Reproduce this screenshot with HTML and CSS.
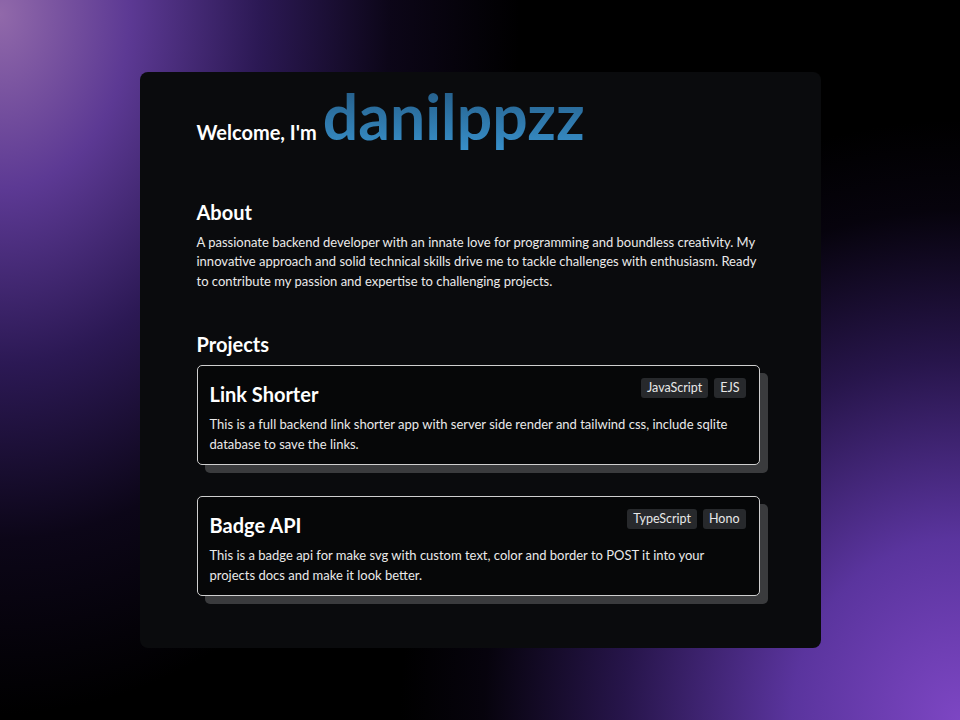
FILE: index.html
```html
<!DOCTYPE html>
<html lang="en">
<head>
<meta charset="utf-8">
<title>danilppzz</title>
<link rel="stylesheet" href="styles.css">
</head>
<body>
<main class="panel">
  <header class="hero">
    <h1 class="hero-title"><span class="hero-small">Welcome, I'm</span> <span class="hero-name">danilppzz</span></h1>
  </header>
  <section class="section about">
    <h2 class="section-title">About</h2>
    <p class="about-text">A passionate backend developer with an innate love for programming and boundless creativity. My innovative approach and solid technical skills drive me to tackle challenges with enthusiasm. Ready to contribute my passion and expertise to challenging projects.</p>
  </section>
  <section class="section projects">
    <h2 class="section-title">Projects</h2>
    <div class="project-list">
      <article class="project">
        <div class="project-head">
          <h3 class="project-title">Link Shorter</h3>
          <div class="tags"><span class="tag">JavaScript</span><span class="tag">EJS</span></div>
        </div>
        <p class="project-desc">This is a full backend link shorter app with server side render and tailwind css, include sqlite database to save the links.</p>
      </article>
      <article class="project">
        <div class="project-head">
          <h3 class="project-title">Badge API</h3>
          <div class="tags"><span class="tag">TypeScript</span><span class="tag">Hono</span></div>
        </div>
        <p class="project-desc">This is a badge api for make svg with custom text, color and border to POST it into your projects docs and make it look better.</p>
      </article>
    </div>
  </section>
</main>
</body>
</html>
```

FILE: styles.css
```css
* { box-sizing: border-box; }
html, body { height: 100%; }
body {
  margin: 0;
  min-height: 720px;
  font-family: Lato, "Noto Sans", sans-serif;
  color: #f2f2f2;
  background:
    radial-gradient(ellipse 520px 700px at 0% 2%, rgba(145,105,170,1) 0%, rgba(100,62,160,0.92) 25%, rgba(62,35,120,0.7) 50%, rgba(30,15,60,0.4) 75%, rgba(0,0,0,0) 100%),
    radial-gradient(ellipse 560px 600px at 100% 100%, rgba(125,70,195,1) 0%, rgba(100,58,175,0.9) 30%, rgba(65,35,125,0.6) 60%, rgba(25,12,50,0.25) 85%, rgba(0,0,0,0) 100%),
    #000;
  display: flex;
  justify-content: center;
  padding-top: 72px;
}
.panel {
  width: 681px;
  height: 576px;
  background: #0a0b0d;
  border-radius: 8px;
  padding: 13px 61px 0 57px;
}
.hero-title { margin: 0; font-weight: 700; line-height: 1; display: flex; align-items: baseline; gap: 6px; }
.hero-small { font-size: 20px; color: #fff; }
.hero-name {
  font-size: 62.5px;
  letter-spacing: 0;
  background: linear-gradient(180deg, #245b85 0%, #3a96d2 100%);
  -webkit-background-clip: text;
  background-clip: text;
  color: transparent;
  padding-bottom: 10px;
}
.section-title { margin: 0; font-size: 20px; font-weight: 700; color: #fff; line-height: 24px; }
.about { margin-top: 42px; }
.about-text { margin: 9px 0 0; font-size: 13px; line-height: 19.5px; color: #eaeaea; }
.projects { margin-top: 41px; }
.project-list { display: flex; flex-direction: column; gap: 31px; margin-top: 9px; }
.project {
  border: 1px solid #cfcfcf;
  border-radius: 5px;
  background: #060708;
  box-shadow: 8px 8px 0 0 #3a3b3d;
  padding: 12px 13px 12px 12px;
  height: 100px;
}
.project-head { display: flex; justify-content: space-between; align-items: flex-start; }
.project-title { margin: 4px 0 0; font-size: 20px; font-weight: 700; color: #fff; line-height: 24px; }
.tags { display: flex; gap: 6px; }
.tag {
  background: #27292c;
  color: #e8e8e8;
  font-size: 12.5px;
  line-height: 20px;
  padding: 0 6px;
  border-radius: 3px;
}
.project-desc { margin: 9px 0 0; font-size: 13px; line-height: 19.5px; color: #eaeaea; }
```
